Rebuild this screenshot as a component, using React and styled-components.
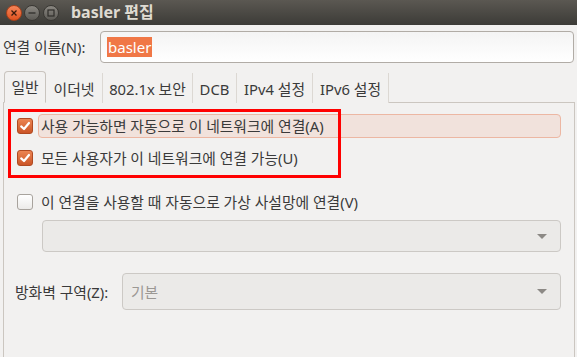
import React from "react";
import styled, { createGlobalStyle } from "styled-components";

const GlobalStyle = createGlobalStyle`
  html, body { margin: 0; padding: 0; background: #f2f1f0; }
  body {
    font-family: "Noto Sans", "Noto Sans CJK KR", sans-serif;
    font-size: 14.8px;
    color: #3a3a3a;
  }
`;

const Window = styled.div`
  position: relative;
  width: 577px;
  height: 357px;
  display: flex;
  flex-direction: column;
  background: #f2f1f0;
  overflow: hidden;
`;

const TitleBar = styled.div`
  flex: none;
  height: 25px;
  display: flex;
  align-items: center;
  padding-left: 6px;
  background: linear-gradient(#5b5852, #3c3b37);
`;

const WinButtons = styled.div`
  display: flex;
  gap: 2px;
`;

const WinButton = styled.div`
  width: 16px;
  height: 16px;
  border-radius: 50%;
  box-sizing: border-box;
  display: flex;
  align-items: center;
  justify-content: center;
  margin-right: ${p => (p.kind === "min" ? 1 : 0)}px;
  border: 1px solid ${p => (p.kind === "close" ? "#a8401a" : "#3a3834")};
  background: ${p =>
    p.kind === "close"
      ? "linear-gradient(#f5865a, #e0521f)"
      : "linear-gradient(#8a8781, #5c5a55)"};
`;

const Title = styled.div`
  margin-left: 12px;
  color: #dfdbd2;
  font-weight: bold;
  font-size: 16px;
  line-height: 25px;
`;

const Content = styled.div`
  flex: 1;
  min-height: 0;
  display: flex;
  flex-direction: column;
  padding: 6px 2px 0 3px;
`;

const NameRow = styled.div`
  display: flex;
  align-items: center;
  height: 32px;
`;

const NameLabel = styled.label`
  width: 97px;
  line-height: 20px;
`;

const Entry = styled.div`
  flex: 1;
  height: 32px;
  box-sizing: border-box;
  margin-right: 1px;
  border: 1px solid #b1aca6;
  border-radius: 4px;
  background: linear-gradient(#f4f4f4, #ffffff);
  display: flex;
  align-items: center;
  padding-left: 6px;
`;

const Selected = styled.span`
  background: #f07746;
  color: #ffffff;
  font-size: 15px;
  line-height: 20px;
  padding: 0 1px;
`;

const TabRow = styled.div`
  display: flex;
  align-items: flex-end;
  height: 32px;
  margin-top: 8px;
  margin-bottom: -1px;
  padding-left: 1px;
`;

const Tab = styled.div`
  position: relative;
  z-index: ${p => (p.active ? 1 : 0)};
  width: ${p => p.w}px;
  height: ${p => (p.active ? 32 : 30)}px;
  box-sizing: border-box;
  display: flex;
  align-items: center;
  justify-content: center;
  padding-top: ${p => (p.active ? 0 : 1)}px;
  white-space: nowrap;
  line-height: 20px;
  background: #f2f1f0;
  border-right: 1px solid #dcd8d3;
  ${p =>
    p.active &&
    `
    border: 1px solid #c9c4be;
    border-bottom-color: #f2f1f0;
    border-radius: 4px 4px 0 0;
  `}
`;

const Panel = styled.div`
  flex: 1;
  display: flex;
  flex-direction: column;
  border: 1px solid #cbc6c0;
  border-bottom: none;
  padding: 11px 13px 0 11px;
`;

const CheckRow = styled.div`
  display: flex;
  align-items: center;
  height: 24px;
  padding-left: 2px;
  margin-top: ${p => p.gap || 0}px;
`;

const Box = styled.div`
  flex: none;
  width: 16px;
  height: 16px;
  box-sizing: border-box;
  border-radius: 3px;
  display: flex;
  align-items: center;
  justify-content: center;
  border: 1px solid ${p => (p.checked ? "#b04a22" : "#a8a39d")};
  background: ${p =>
    p.checked
      ? "linear-gradient(#ec8553, #cb5527)"
      : "linear-gradient(#ffffff, #ecebe9)"};
`;

const CheckLabel = styled.div`
  flex: ${p => (p.focused ? 1 : "none")};
  height: 24px;
  box-sizing: border-box;
  display: flex;
  align-items: center;
  margin-left: 5px;
  padding-left: 2px;
  line-height: 20px;
  border-radius: 4px;
  border: 1px solid ${p => (p.focused ? "#ecb7a3" : "transparent")};
  background: ${p => (p.focused ? "#f1e2dc" : "transparent")};
`;

const Combo = styled.div`
  flex: ${p => (p.grow ? 1 : "none")};
  height: ${p => p.h}px;
  box-sizing: border-box;
  margin-left: ${p => p.indent || 0}px;
  margin-top: ${p => p.gap || 0}px;
  border: 1px solid #ccc9c5;
  border-radius: 4px;
  background: #ebeae8;
  display: flex;
  align-items: center;
  justify-content: space-between;
  padding: 0 13px 0 8px;
  color: #9b9894;
  line-height: 20px;
`;

const Arrow = styled.div`
  width: 0;
  height: 0;
  border-left: 5px solid transparent;
  border-right: 5px solid transparent;
  border-top: 5px solid #8c8985;
`;

const FieldRow = styled.div`
  display: flex;
  align-items: center;
  margin-top: 21px;
`;

const FieldLabel = styled.label`
  width: 107px;
  line-height: 20px;
`;

const Annotation = styled.div`
  position: absolute;
  left: 8px;
  top: 109px;
  width: 333px;
  height: 69px;
  box-sizing: border-box;
  border: 3px solid #ff0000;
  pointer-events: none;
`;

const Tick = () => (
  <svg width="12" height="12" viewBox="0 0 12 12">
    <path d="M2.2 6.4 L5 9 L10 3" fill="none" stroke="#ffffff" strokeWidth="2.2" strokeLinecap="round" strokeLinejoin="round" />
  </svg>
);

const Check = ({ checked, focused, gap, children }) => (
  <CheckRow gap={gap}>
    <Box checked={checked}>{checked && <Tick />}</Box>
    <CheckLabel focused={focused}>{children}</CheckLabel>
  </CheckRow>
);

const tabs = [
  { label: "일반", w: 42 },
  { label: "이더넷", w: 57 },
  { label: "802.1x 보안", w: 90 },
  { label: "DCB", w: 44 },
  { label: "IPv4 설정", w: 76 },
  { label: "IPv6 설정", w: 76 },
];

export default function App() {
  return (
    <Window>
      <GlobalStyle />
      <TitleBar>
        <WinButtons>
          <WinButton kind="close">
            <svg width="8" height="8" viewBox="0 0 8 8">
              <path d="M1.5 1.5 L6.5 6.5 M6.5 1.5 L1.5 6.5" stroke="#3b1a0c" strokeWidth="1.3" />
            </svg>
          </WinButton>
          <WinButton kind="min">
            <svg width="8" height="8" viewBox="0 0 8 8">
              <path d="M0.5 4 H7.5" stroke="#2f2d2a" strokeWidth="1.3" />
            </svg>
          </WinButton>
          <WinButton kind="max">
            <svg width="8" height="8" viewBox="0 0 8 8">
              <rect x="1" y="1" width="6" height="6" fill="none" stroke="#2f2d2a" strokeWidth="1.2" />
            </svg>
          </WinButton>
        </WinButtons>
        <Title>basler 편집</Title>
      </TitleBar>

      <Content>
        <NameRow>
          <NameLabel>연결 이름(N):</NameLabel>
          <Entry>
            <Selected>basler</Selected>
          </Entry>
        </NameRow>

        <TabRow>
          {tabs.map((t, i) => (
            <Tab key={t.label} w={t.w} active={i === 0}>
              {t.label}
            </Tab>
          ))}
        </TabRow>

        <Panel>
          <Check checked focused>사용 가능하면 자동으로 이 네트워크에 연결(A)</Check>
          <Check checked gap={8}>모든 사용자가 이 네트워크에 연결 가능(U)</Check>
          <Check gap={20}>이 연결을 사용할 때 자동으로 가상 사설망에 연결(V)</Check>
          <Combo h={32} indent={27} gap={6}>
            <span />
            <Arrow />
          </Combo>
          <FieldRow>
            <FieldLabel>방화벽 구역(Z):</FieldLabel>
            <Combo h={37} grow>
              <span>기본</span>
              <Arrow />
            </Combo>
          </FieldRow>
        </Panel>
      </Content>

      <Annotation />
    </Window>
  );
}
